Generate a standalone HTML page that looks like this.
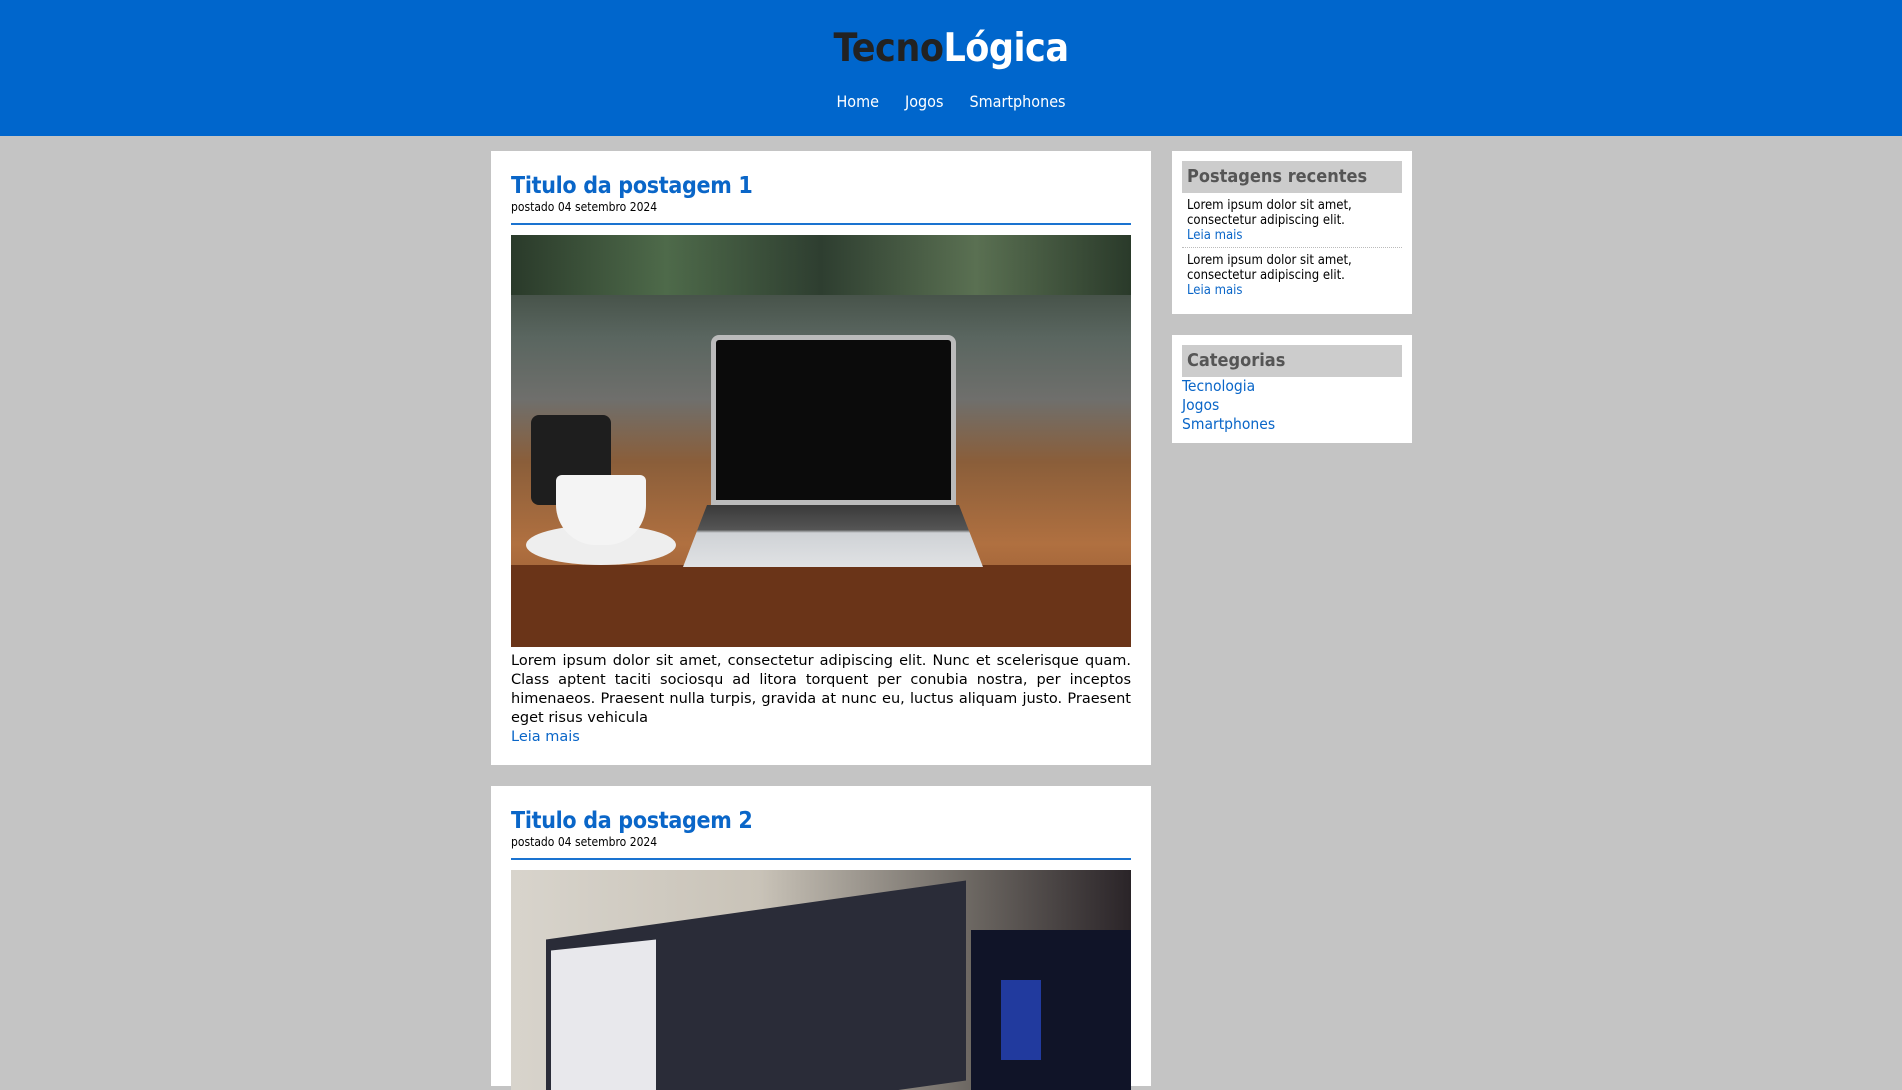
<!DOCTYPE html>
<html><head><meta charset="utf-8"><style>
*{margin:0;padding:0;box-sizing:border-box}
body{width:1902px;height:1079px;overflow:hidden;background:#c4c4c4;font-family:"DejaVu Sans Condensed","Liberation Sans",sans-serif;}
header{height:136px;background:#0066cc;text-align:center;position:relative}
.logo{position:absolute;top:26px;left:0;right:0;font-size:39px;font-weight:bold;color:#fff;letter-spacing:-0.5px}
.logo span{color:#222}
nav{position:absolute;top:92px;left:0;right:0;font-size:16px;color:#fff}
nav a{margin:0 13px;color:#fff}
.card{position:absolute;left:491px;width:660px;background:#fff;padding:0 20px}
h2{color:#0a66c8;font-size:23px;font-weight:bold;line-height:28px;letter-spacing:-0.3px}
.date{font-size:12px;line-height:14px;color:#000}
.rule{height:2px;background:#1a73d0;margin-top:9px}
p{font-family:"DejaVu Sans","Liberation Sans",sans-serif;font-size:14.5px;line-height:19px;text-align:justify;color:#000}
a{color:#0a66c8;text-decoration:none}
.box{position:absolute;left:1172px;width:240px;background:#fff;padding:10px}
.box h3{background:#ccc;color:#555;font-size:18px;height:32px;line-height:32px;padding-left:5px;font-weight:bold}
.item{font-size:13px;line-height:15px;padding:5px 5px 4px;border-bottom:1px dotted #bbb}
.item:last-child{border-bottom:none}
.cat a{display:block;font-size:15.5px;line-height:19px}
</style></head><body>
<header><div class="logo"><span>Tecno</span>Lógica</div>
<nav><a>Home</a><a>Jogos</a><a>Smartphones</a></nav></header>

<div class="card" style="top:151px;height:614px">
<h2 style="margin-top:21px">Titulo da postagem 1</h2>
<div class="date">postado 04 setembro 2024</div>
<div class="rule"></div>
<div style="position:relative;margin-top:10px;height:412px;overflow:hidden;background:linear-gradient(180deg,#2e3a2c 0%,#5a6660 25%,#6f6f6c 40%,#8a5e3a 55%,#b07040 75%,#8a4f2a 100%)">
 <div style="position:absolute;left:0;top:0;right:0;height:60px;background:linear-gradient(90deg,#2a3a2a,#4e6a4a,#2e3e30,#5a7052,#2a3a2a)"></div>
 <div style="position:absolute;left:20px;top:180px;width:80px;height:90px;background:#1e1e1e;border-radius:8px"></div>
 <div style="position:absolute;left:0;top:330px;right:0;height:82px;background:#6a3418"></div>
 <div style="position:absolute;left:200px;top:100px;width:245px;height:170px;background:#0b0b0b;border:5px solid #bbb;border-radius:8px 8px 0 0"></div>
 <div style="position:absolute;left:172px;top:270px;width:300px;height:62px;background:linear-gradient(#3a3a3a 0%,#555 40%,#cfd2d6 45%,#e0e2e4 100%);clip-path:polygon(8% 0,92% 0,100% 100%,0 100%)"></div>
 <div style="position:absolute;left:15px;top:290px;width:150px;height:40px;background:#eee;border-radius:50%"></div>
 <div style="position:absolute;left:45px;top:240px;width:90px;height:70px;background:#f4f4f4;border-radius:6px 6px 40px 40px"></div>
</div>
<p style="margin-top:5px">Lorem ipsum dolor sit amet, consectetur adipiscing elit. Nunc et scelerisque quam. Class aptent taciti sociosqu ad litora torquent per conubia nostra, per inceptos himenaeos. Praesent nulla turpis, gravida at nunc eu, luctus aliquam justo. Praesent eget risus vehicula<br><a>Leia mais</a></p>
</div>

<div class="card" style="top:786px;height:300px">
<h2 style="margin-top:21px">Titulo da postagem 2</h2>
<div class="date">postado 04 setembro 2024</div>
<div class="rule"></div>
<div style="position:relative;margin-top:10px;height:220px;overflow:hidden;background:linear-gradient(90deg,#d8d4cc,#c9c3b8 40%,#6a6560 75%,#2a2428)">
 <div style="position:absolute;left:35px;top:40px;width:420px;height:200px;background:#2a2c38;transform:skewY(-8deg)"></div>
 <div style="position:absolute;left:40px;top:75px;width:105px;height:160px;background:#e8e8ec;transform:skewY(-6deg)"></div>
 <div style="position:absolute;left:460px;top:60px;width:160px;height:160px;background:#101428"></div>
 <div style="position:absolute;left:490px;top:110px;width:40px;height:80px;background:#2a4ad0;opacity:.7"></div>
</div>
</div>

<div class="box" style="top:151px;height:163px">
<h3>Postagens recentes</h3>
<div class="item">Lorem ipsum dolor sit amet, consectetur adipiscing elit.<br><a>Leia mais</a></div>
<div class="item">Lorem ipsum dolor sit amet, consectetur adipiscing elit.<br><a>Leia mais</a></div>
</div>

<div class="box cat" style="top:335px;height:108px">
<h3>Categorias</h3>
<a>Tecnologia</a><a>Jogos</a><a>Smartphones</a>
</div>
</body></html>
